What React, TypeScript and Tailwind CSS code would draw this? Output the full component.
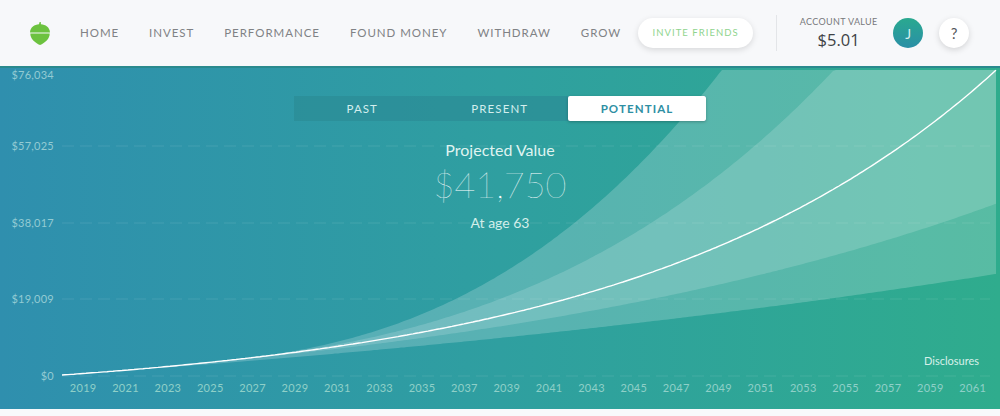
import React from 'react';

const navItems = ['HOME', 'INVEST', 'PERFORMANCE', 'FOUND MONEY', 'WITHDRAW', 'GROW'];
const years = Array.from({ length: 22 }, (_, i) => 2019 + i * 2);
const gridLines = [146, 223, 299, 376];

const BASE_Y = 375;
const TOP_Y = 70;

// growth curves fitted to the screenshot, x is page px, return value is height above the $0 line
const grow = (x: number, a: number, k: number) => a * (Math.exp(k * (x - 62)) - 1);
const mainH = (x: number) => grow(x, 25.3, 0.00275);
const spread = (x: number, b: number, p: number) => (x > 225 ? b * Math.pow(x - 225, p) : 0);
const outerUpperH = (x: number) => mainH(x) + spread(x, 4.34e-5, 2.45);
const innerUpperH = (x: number) => mainH(x) + spread(x, 1.79e-5, 2.45);
const innerLowerH = (x: number) => Math.min(mainH(x), grow(x, 44, 0.0017));
const outerLowerH = (x: number) => Math.min(mainH(x), grow(x, 76.7, 0.0009));

const xs: number[] = [];
for (let x = 62; x < 996; x += 3) xs.push(x);
xs.push(996);

// svg sits right under the header, so y is shifted by 66
const toPoints = (fn: (x: number) => number, from: number[]) =>
    from.map((x) => `${x},${(Math.max(BASE_Y - fn(x), TOP_Y) - 66).toFixed(1)}`);

const band = (upper: (x: number) => number, lower: (x: number) => number) =>
    [...toPoints(upper, xs), ...toPoints(lower, [...xs].reverse())].join(' ');

const Acorn = () => (
    <svg width="20" height="23" viewBox="0 0 20 23" fill="#6cc23f">
        <path d="M9 2.2 L9.6 0 L10.8 0 L10.9 2.2 C15.5 2.6 19.6 5 20 10.4 L0 10.4 C0.4 5 4.5 2.6 9 2.2 Z" />
        <path d="M0.3 11.4 L19.7 11.4 C19.7 17 15 20.6 10 23 C5 20.6 0.3 17 0.3 11.4 Z" />
    </svg>
);

const YLabel = ({ value, className }: { value: string; className: string }) => (
    <div className={`w-[54px] text-right text-[11px] leading-4 tracking-[0.25px] text-[#93cbd3] ${className}`}>{value}</div>
);

const App = () => {
    return (
        <div className="h-[416px] w-[1000px] overflow-hidden bg-[#f8f9fb] font-['Lato','Open_Sans',sans-serif]">
            <header className="flex h-[66px] items-center bg-[#f7f8fa] pl-[30px]">
                <Acorn />
                <nav className="ml-[30px] flex gap-[30px] text-[11.5px] tracking-[0.95px] text-[#808285]">
                    {navItems.map((item) => (
                        <span key={item} className="whitespace-nowrap">{item}</span>
                    ))}
                </nav>
                <button className="ml-[17px] h-[30px] w-[115px] rounded-full bg-white text-[9.5px] tracking-[1.05px] text-[#8fd48e] shadow-[0_2px_6px_rgba(0,0,0,0.13)]">
                    INVITE FRIENDS
                </button>
                <div className="ml-[23px] h-[36px] w-px bg-[#e3e5e8]" />
                <div className="ml-[22px] flex w-[79px] flex-col items-center">
                    <span className="whitespace-nowrap text-[9px] leading-3 tracking-[0.35px] text-[#77797c]">ACCOUNT VALUE</span>
                    <span className="mt-[2px] font-['Open_Sans',sans-serif] text-[16.5px] leading-5 text-[#3f4346]">$5.01</span>
                </div>
                <div className="ml-[15px] flex h-[30px] w-[30px] items-center justify-center rounded-full bg-gradient-to-b from-[#2aa98f] to-[#2b8fa6] text-[14px] text-[#d5efee]">
                    J
                </div>
                <div className="ml-[16px] flex h-[30px] w-[30px] items-center justify-center rounded-full bg-white text-[15px] text-[#55585b] shadow-[0_2px_6px_rgba(0,0,0,0.15)]">
                    ?
                </div>
            </header>

            <main className="relative flex h-[343px] flex-col items-center border-t-2 border-[#2a8a8e] bg-gradient-to-r from-[#2f8fae] via-[#2f9fa0] to-[#2fac8d] pt-[28px]">
                <svg className="absolute -top-[2px] left-0" width="1000" height="343" viewBox="0 0 1000 343">
                    <polygon points={band(outerUpperH, outerLowerH)} fill="#ffffff" fillOpacity="0.2" />
                    <polygon points={band(innerUpperH, innerLowerH)} fill="#ffffff" fillOpacity="0.16" />
                    {gridLines.map((y) => (
                        <line key={y} x1="62" y1={y - 66} x2="990" y2={y - 66} stroke="#ffffff" strokeOpacity="0.1" strokeDasharray="12 6" />
                    ))}
                    <polyline points={toPoints(mainH, xs).join(' ')} fill="none" stroke="#ffffff" strokeWidth="1.4" />
                </svg>

                <div className="absolute left-0 top-0 flex flex-col">
                    <YLabel value="$76,034" className="-mt-[1px]" />
                    <YLabel value="$57,025" className="mt-[55px]" />
                    <YLabel value="$38,017" className="mt-[61px]" />
                    <YLabel value="$19,009" className="mt-[60px]" />
                    <YLabel value="$0" className="mt-[61px]" />
                </div>

                <div className="relative flex h-[25px] w-[412px] bg-[#2b8b96]/70 text-[11.5px] tracking-[1.1px] text-[#d3eeee]">
                    <div className="flex flex-1 items-center justify-center pr-[1px]">PAST</div>
                    <div className="flex flex-1 items-center justify-center">PRESENT</div>
                    <div className="flex w-[138px] items-center justify-center rounded-[2px] bg-white font-bold text-[#2e8fa3] shadow-[0_1px_3px_rgba(0,0,0,0.25)]">
                        POTENTIAL
                    </div>
                </div>

                <div className="relative mt-[19px] text-[16px] leading-5 text-[#dff3f0]">Projected Value</div>
                <div className="relative mt-[1px] text-[36px] font-extralight leading-[46px] text-white">$41,750</div>
                <div className="relative mt-[6px] text-[14px] leading-5 text-[#d3eeea]">At age 63</div>

                <div className="relative mt-auto self-end pr-[21px] text-[11px] leading-4 text-[#d7f0e9]">Disclosures</div>
                <div className="relative mb-[13px] mt-[11px] grid w-full grid-cols-[repeat(22,42.36px)] pl-[62px] text-[11px] leading-4 tracking-[0.3px] text-[#8fd0c8]">
                    {years.map((year) => (
                        <span key={year} className="text-center">{year}</span>
                    ))}
                </div>
            </main>
        </div>
    );
};

export default App;
